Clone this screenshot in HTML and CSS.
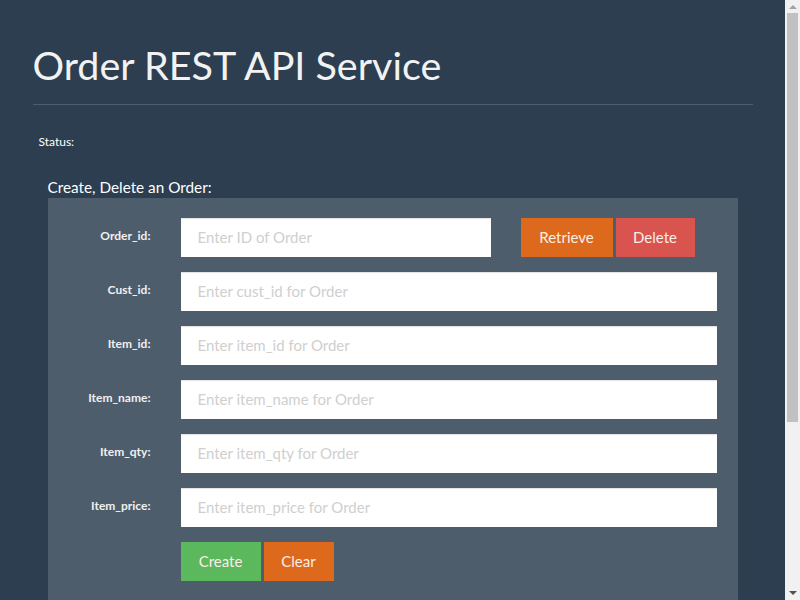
FILE: index.html
```html
<!DOCTYPE html>
<html>
<head>
<meta charset="utf-8">
<title>Order REST API Service</title>
<link rel="stylesheet" href="styles.css">
</head>
<body>
<div class="page">
<div class="container">
  <h1 class="title">Order REST API Service</h1>
  <hr class="rule">
  <div class="status">Status:</div>
  <div class="section">
    <h3 class="section-title">Create, Delete an Order:</h3>
    <div class="panel">
      <div class="row">
        <label class="label">Order_id:</label>
        <input class="field field-short" placeholder="Enter ID of Order">
        <div class="actions">
          <button class="btn btn-orange btn-retrieve">Retrieve</button>
          <button class="btn btn-red">Delete</button>
        </div>
      </div>
      <div class="row">
        <label class="label">Cust_id:</label>
        <input class="field" placeholder="Enter cust_id for Order">
      </div>
      <div class="row">
        <label class="label">Item_id:</label>
        <input class="field" placeholder="Enter item_id for Order">
      </div>
      <div class="row">
        <label class="label">Item_name:</label>
        <input class="field" placeholder="Enter item_name for Order">
      </div>
      <div class="row">
        <label class="label">Item_qty:</label>
        <input class="field" placeholder="Enter item_qty for Order">
      </div>
      <div class="row">
        <label class="label">Item_price:</label>
        <input class="field" placeholder="Enter item_price for Order">
      </div>
      <div class="row">
        <span class="label"></span>
        <div class="buttons">
          <button class="btn btn-green">Create</button>
          <button class="btn btn-orange">Clear</button>
        </div>
      </div>
    </div>
  </div>
</div>
</div>
<div class="scrollbar">
  <div class="arrow arrow-up"></div>
  <div class="thumb"></div>
  <div class="arrow arrow-down"></div>
</div>
</body>
</html>
```

FILE: styles.css
```css
html, body {
  margin: 0;
  padding: 0;
  background: #2c3e50;
  color: #ffffff;
  font-family: Lato, "Open Sans", sans-serif;
}
.page {
  margin-right: 15px;
}
.container {
  width: 720px;
  margin: 0 auto;
  padding: 0 15px;
}
.title {
  margin: 0;
  padding-top: 42px;
  font-size: 39.5px;
  font-weight: 400;
  line-height: 46px;
  color: #f2f2f2;
}
.rule {
  margin: 16px 0 0 0;
  border: 0;
  border-top: 1px solid #4d5d6d;
  height: 0;
}
.status {
  margin: 30px 0 0 6px;
  font-size: 12px;
  line-height: 14px;
}
.section {
  margin: 29px 15px 0 15px;
}
.section-title {
  margin: 0;
  font-size: 15.3px;
  font-weight: 400;
  line-height: 18px;
}
.panel {
  margin-top: 2px;
  background: #4e5d6c;
  padding: 20px 21px 250px 0;
}
.row {
  display: flex;
  align-items: flex-start;
  margin-bottom: 15px;
}
.label {
  width: 103px;
  flex: none;
  text-align: right;
  font-size: 12px;
  font-weight: 700;
  line-height: 14px;
  padding-top: 11px;
  margin-right: 30px;
  color: #f0f0f0;
}
.field {
  flex: 1;
  height: 39px;
  box-sizing: border-box;
  border: 0;
  border-radius: 0;
  background: #fff;
  box-shadow: inset 0 1px 1px rgba(0,0,0,0.12);
  padding: 0 17px 2px 17px;
  font-family: Lato, sans-serif;
  font-size: 15px;
  color: #333;
  outline: none;
}
.field::placeholder {
  color: #cfcfcf;
}
.field-short {
  flex: none;
  width: 310px;
}
.actions {
  display: flex;
  gap: 3px;
  margin-left: 30px;
}
.buttons {
  display: flex;
  gap: 3px;
}
.btn {
  height: 39px;
  border: 0;
  border-radius: 0;
  padding: 0 0 2px 0;
  font-family: Lato, sans-serif;
  font-size: 15px;
  color: #fbeee6;
  cursor: pointer;
}
.btn-retrieve {
  width: 92px;
}
.btn-orange {
  background: #dd691c;
}
.btn-red {
  background: #d9534f;
  width: 79px;
}
.btn-green {
  background: #5cb85c;
  width: 80px;
}
.buttons .btn-orange {
  width: 70px;
}
.scrollbar {
  position: fixed;
  top: 0;
  right: 0;
  width: 15px;
  height: 100%;
  background: #f1f1f1;
  display: flex;
  flex-direction: column;
  align-items: center;
}
.arrow {
  width: 0;
  height: 0;
  border-left: 4px solid transparent;
  border-right: 4px solid transparent;
  flex: none;
}
.arrow-up {
  margin-top: 5px;
  border-bottom: 4px solid #a3a3a3;
}
.thumb {
  width: 11px;
  height: 409px;
  margin-top: 4px;
  background: #c1c1c1;
}
.arrow-down {
  margin-top: auto;
  margin-bottom: 5px;
  border-top: 4px solid #505050;
}
```
